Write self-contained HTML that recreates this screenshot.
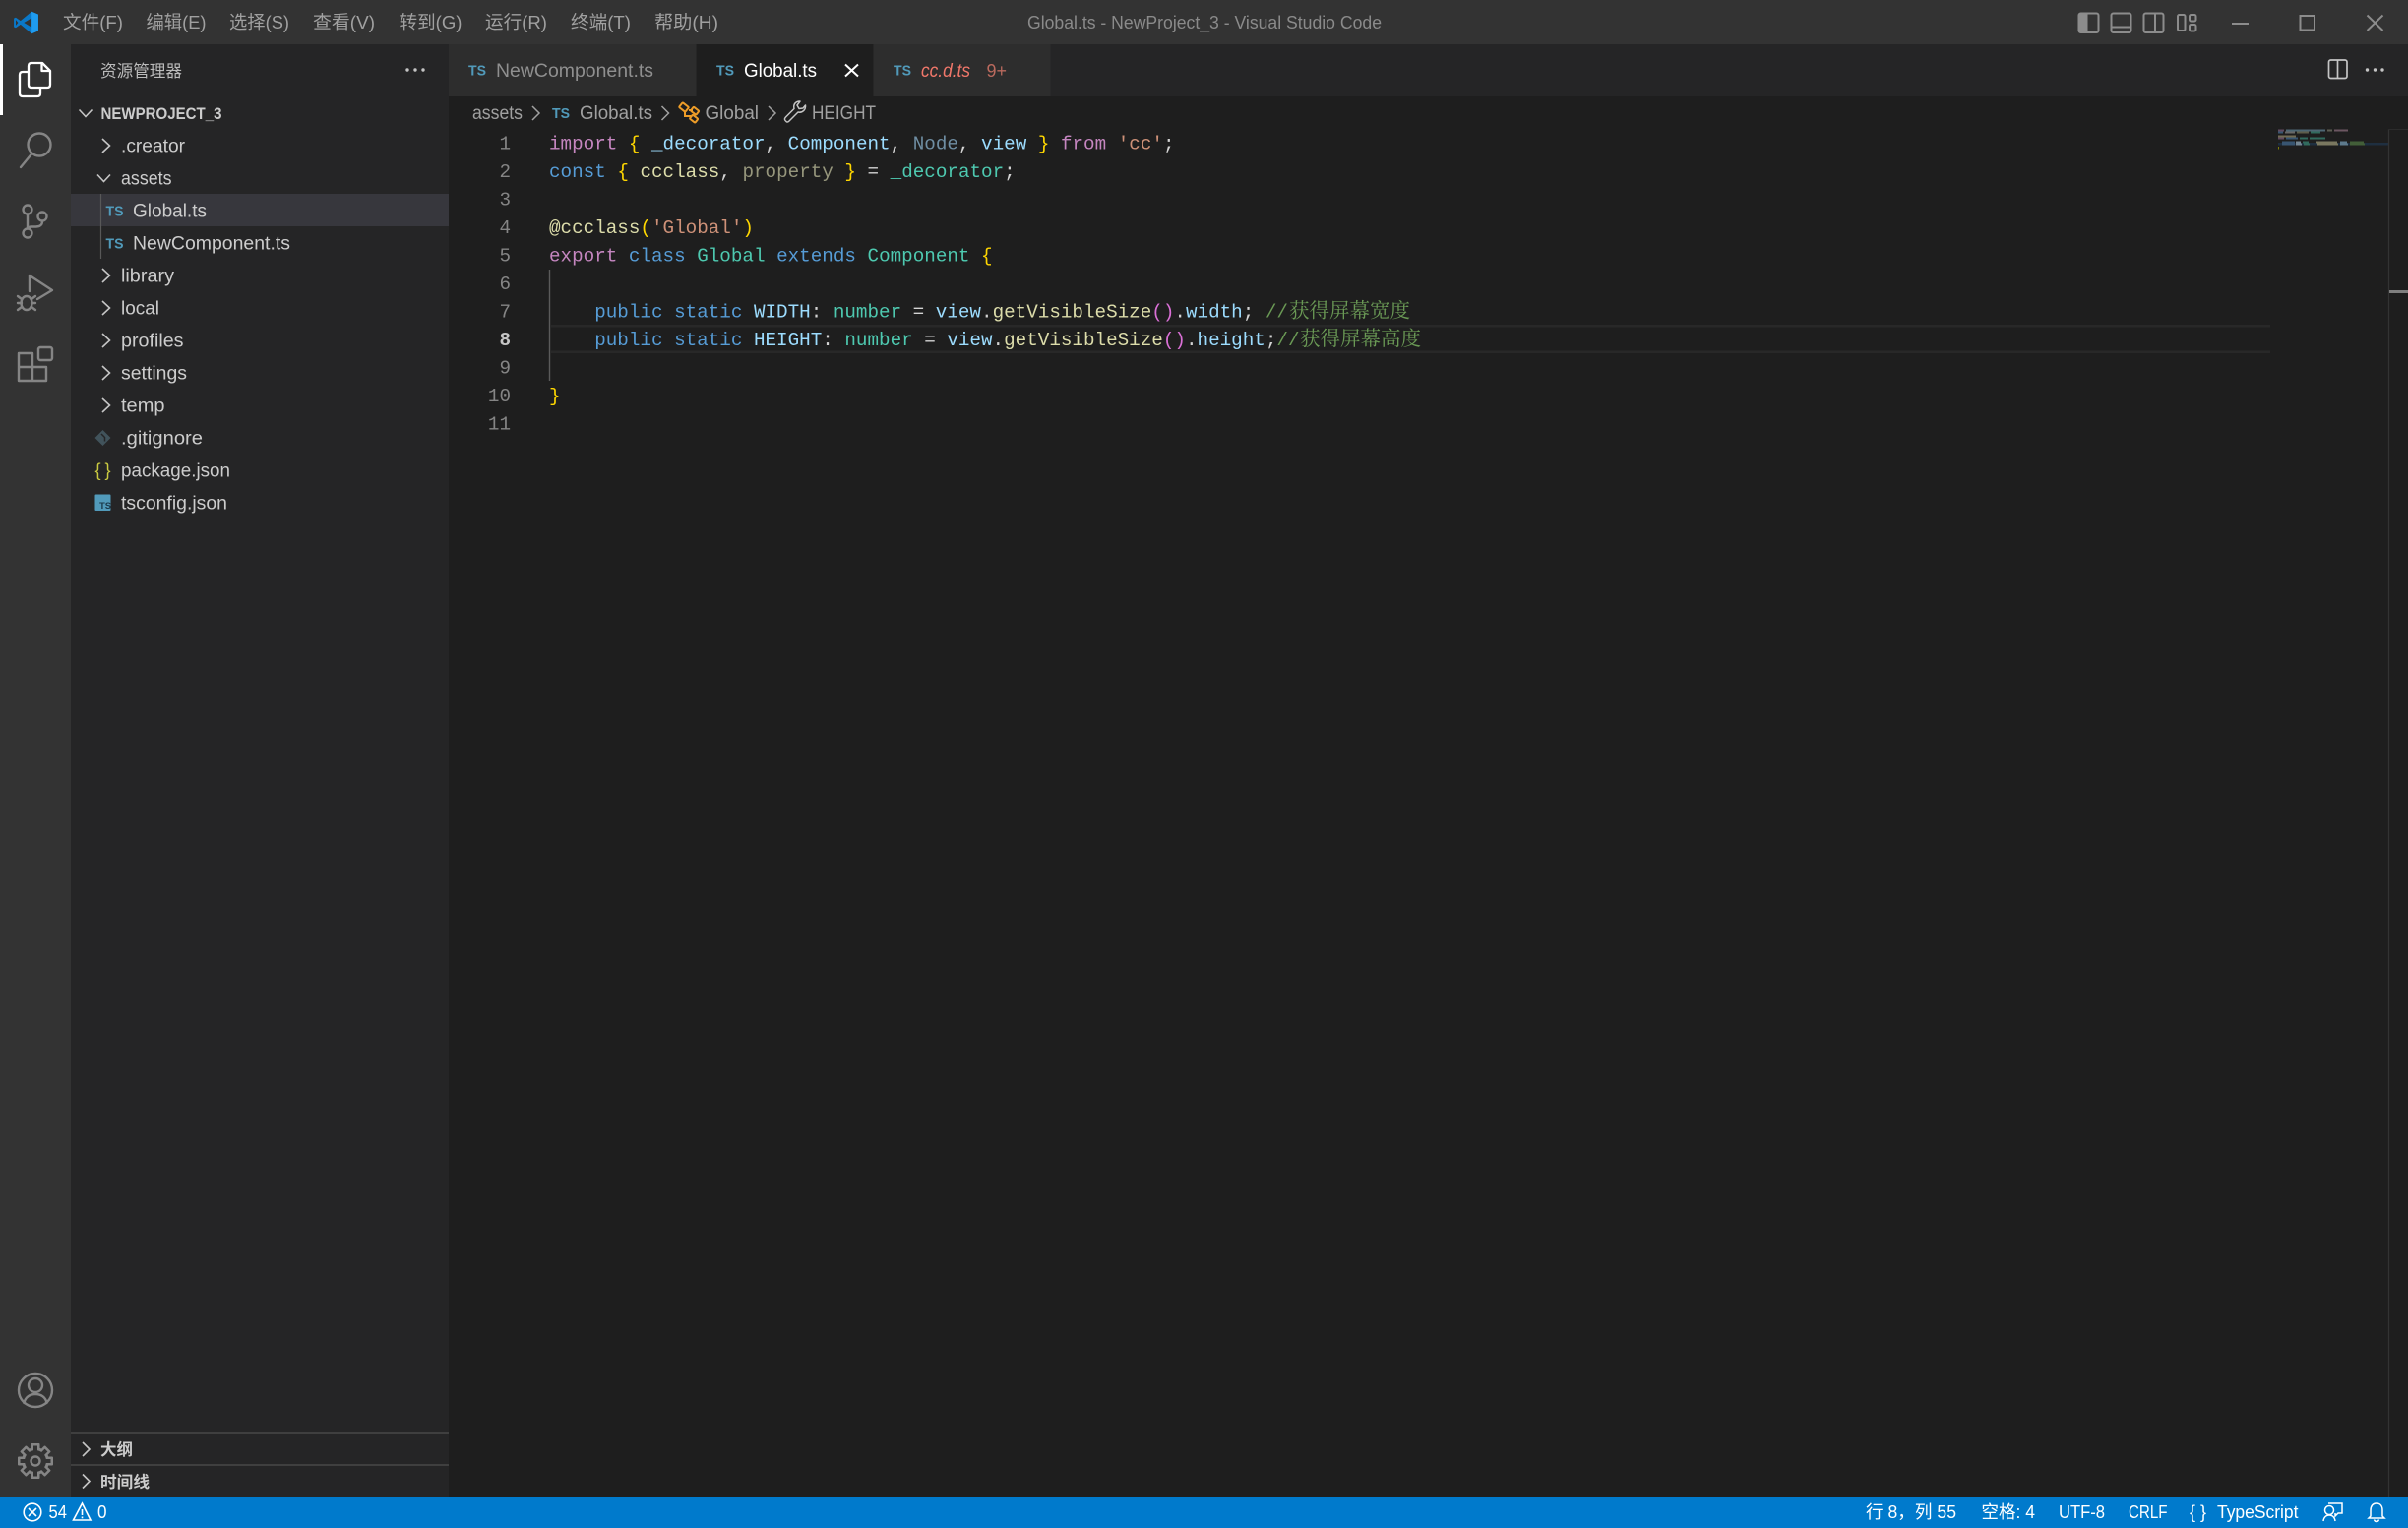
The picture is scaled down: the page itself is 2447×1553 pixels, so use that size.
<!DOCTYPE html>
<html lang="zh"><head><meta charset="utf-8"><title>Global.ts - NewProject_3 - Visual Studio Code</title>
<style>
html,body{margin:0;padding:0;background:#1e1e1e;width:2447px;height:1553px;overflow:hidden}
svg{display:block;position:absolute;left:0;top:0}
text{font-family:"Liberation Sans","Noto Sans CJK SC",sans-serif;white-space:pre}
.m{font-size:18.5px;fill:#a0a0a0}
.s{font-size:19px;fill:#cccccc}
.b{font-size:19px;fill:#a0a0a0}
.st{font-size:18px;fill:#ffffff}
.ts{font-size:15px;font-weight:bold;fill:#519aba}
.c{font-family:"Liberation Mono",monospace;font-size:19.25px;fill:#d4d4d4}
.n{font-family:"Liberation Mono",monospace;font-size:19.25px;fill:#858585;text-anchor:end}
.zh{font-family:"Noto Serif CJK SC",serif;font-size:20.5px;fill:#6a9955}
.ch{fill:none;stroke:#c5c5c5;stroke-width:1.6}
.ai{fill:none;stroke:#858585;stroke-width:2.4;stroke-linecap:round;stroke-linejoin:round}
.wi{fill:none;stroke:#8c8c8c;stroke-width:2}
.k{fill:#c586c0}.d{fill:#569cd6}.g{fill:#ffd700}.v{fill:#9cdcfe}.t{fill:#4ec9b0}.f{fill:#dcdcaa}.r{fill:#ce9178}.o{fill:#da70d6}.u{fill:#4fc1ff}
</style></head><body>
<svg width="2447" height="1553" viewBox="0 0 2447 1553" xmlns="http://www.w3.org/2000/svg">
<!-- backgrounds -->
<rect width="2447" height="1553" fill="#1e1e1e"/>
<rect width="2447" height="45" fill="#333333"/>
<rect y="45" width="72" height="1476" fill="#333333"/>
<rect x="72" y="45" width="384" height="1476" fill="#252526"/>
<rect x="456" y="45" width="1991" height="53" fill="#252526"/>
<rect x="456" y="45" width="251.500" height="53" fill="#2d2d2d"/>
<rect x="707.500" y="45" width="180" height="53" fill="#1e1e1e"/>
<rect x="887.500" y="45" width="180" height="53" fill="#2d2d2d"/>
<rect y="1521" width="2447" height="32" fill="#007acc"/>

<!-- title bar -->
<g transform="translate(13,11) scale(.27,.24)">
<polygon points="96,15 71,3 29,42 11,28 4,32 4,68 11,72 29,58 71,97 96,85" fill="#0a78c8"/>
<polygon points="71,30 42,50 71,70" fill="#333333"/>
<polygon points="11,38 20,50 11,62" fill="#333333"/>
<polygon points="71,3 96,15 96,85 71,97 71,70 71,30" fill="#1f9cf0"/>
</g>
<text class="m" x="64" y="29" textLength="61" lengthAdjust="spacingAndGlyphs">文件(F)</text>
<text class="m" x="148.500" y="29" textLength="61" lengthAdjust="spacingAndGlyphs">编辑(E)</text>
<text class="m" x="233" y="29" textLength="61" lengthAdjust="spacingAndGlyphs">选择(S)</text>
<text class="m" x="318" y="29" textLength="63" lengthAdjust="spacingAndGlyphs">查看(V)</text>
<text class="m" x="405.500" y="29" textLength="64" lengthAdjust="spacingAndGlyphs">转到(G)</text>
<text class="m" x="493" y="29" textLength="63" lengthAdjust="spacingAndGlyphs">运行(R)</text>
<text class="m" x="580" y="29" textLength="61" lengthAdjust="spacingAndGlyphs">终端(T)</text>
<text class="m" x="665" y="29" textLength="65" lengthAdjust="spacingAndGlyphs">帮助(H)</text>
<text x="1044" y="29" font-size="18" fill="#8a8a8a" textLength="360" lengthAdjust="spacingAndGlyphs">Global.ts - NewProject_3 - Visual Studio Code</text>

<rect class="wi" x="2112.500" y="13.500" width="20" height="19.500" rx="2"/>
<rect x="2112.500" y="13.500" width="9" height="19.500" fill="#8c8c8c"/>
<rect class="wi" x="2145.500" y="13.500" width="20" height="19.500" rx="2"/><path class="wi" d="M2145.500 27.500h20"/>
<rect class="wi" x="2178.500" y="13.500" width="20" height="19.500" rx="2"/><path class="wi" d="M2190 13.500v19.500"/>
<rect class="wi" x="2213" y="15" width="7.500" height="16" rx="1.500"/>
<rect class="wi" x="2225" y="15" width="6.500" height="6.500" rx="1.500"/>
<rect class="wi" x="2225" y="25" width="6.500" height="6.500" rx="1.500"/>
<path class="wi" d="M2268 24h17"/>
<rect class="wi" x="2337.500" y="16" width="14.500" height="14.500"/>
<path class="wi" d="M2405.500 15.500l16 15.500M2421.500 15.500l-16 15.500"/>

<!-- activity bar -->
<rect x="0" y="45" width="3" height="72" fill="#ffffff"/>
<g fill="none" stroke="#ffffff" stroke-width="2.300" stroke-linejoin="round">
<path d="M29 73h-6q-3 0 -3 3v19q0 3 3 3h15q3 0 3 -3v-6"/>
<path d="M32 64h11l8 8v14q0 3 -3 3h-16q-3 0 -3 -3v-19q0 -3 3 -3z"/>
<path d="M42.500 64v8h8"/>
</g>
<circle class="ai" cx="40" cy="147" r="11.500"/><path class="ai" d="M32.500 156L21 170"/>
<circle class="ai" cx="28" cy="213" r="4.500"/><circle class="ai" cx="28" cy="237" r="4.500"/><circle class="ai" cx="43" cy="220" r="4.500"/>
<path class="ai" d="M28 218v14M43 225c0 5 -4 5.500 -8 5.500h-3q-2.500 0 -4 1.500"/>
<path class="ai" d="M30 296v-16l23 15l-15 9"/>
<ellipse class="ai" cx="27" cy="308" rx="5.500" ry="7"/>
<path class="ai" d="M18 301l4 3M36 301l-4 3M18 308h4M36 308h-4M18 315l4 -3M36 315l-4 -3"/>
<path class="ai" d="M19 359h14v14h14v14h-28zM19 373h14v14"/>
<rect class="ai" x="39" y="353" width="14" height="13" rx="2"/>
<circle class="ai" cx="36" cy="1413" r="17"/>
<circle class="ai" cx="36" cy="1408" r="7"/>
<path class="ai" d="M24.500 1426c1 -6 6 -9 11.500 -9s10.500 3 11.500 9"/>
<g transform="translate(36,1485)">
<g fill="#858585"><circle r="14"/><rect x="-4.500" y="-18" width="9" height="36" rx="1"/><rect x="-4.500" y="-18" width="9" height="36" rx="1" transform="rotate(45)"/><rect x="-4.500" y="-18" width="9" height="36" rx="1" transform="rotate(90)"/><rect x="-4.500" y="-18" width="9" height="36" rx="1" transform="rotate(135)"/></g>
<g fill="#333333"><circle r="11"/><rect x="-2" y="-15.500" width="4" height="31"/><rect x="-2" y="-15.500" width="4" height="31" transform="rotate(45)"/><rect x="-2" y="-15.500" width="4" height="31" transform="rotate(90)"/><rect x="-2" y="-15.500" width="4" height="31" transform="rotate(135)"/></g>
<circle r="4.500" fill="none" stroke="#858585" stroke-width="2.400"/>
</g>

<!-- sidebar -->
<text x="102" y="78" font-size="17" fill="#bbbbbb" textLength="83" lengthAdjust="spacingAndGlyphs">资源管理器</text>
<g fill="#c5c5c5"><circle cx="414" cy="71" r="1.700"/><circle cx="422" cy="71" r="1.700"/><circle cx="430" cy="71" r="1.700"/></g>
<rect x="72" y="197" width="384" height="33" fill="#37373d"/>
<path d="M102.500 197v66" stroke="#585858" stroke-width="1.200"/>

<path class="ch" d="M80.500 111.500l6.500 7l6.500 -7"/>
<text x="102.500" y="121" font-size="16.500" font-weight="bold" fill="#cccccc" textLength="123" lengthAdjust="spacingAndGlyphs">NEWPROJECT_3</text>
<path class="ch" d="M104 141l7.500 7l-7.500 7"/><text class="s" x="123" y="154.500" textLength="65" lengthAdjust="spacingAndGlyphs">.creator</text>
<path class="ch" d="M99 177.500l6.500 7l6.500 -7"/><text class="s" x="123" y="187.500" textLength="51.500" lengthAdjust="spacingAndGlyphs">assets</text>
<text class="ts" x="107.500" y="219.500" textLength="18" lengthAdjust="spacingAndGlyphs">TS</text><text class="s" x="135" y="220.500" textLength="75" lengthAdjust="spacingAndGlyphs">Global.ts</text>
<text class="ts" x="107.500" y="252.500" textLength="18" lengthAdjust="spacingAndGlyphs">TS</text><text class="s" x="135" y="253.500" textLength="160" lengthAdjust="spacingAndGlyphs">NewComponent.ts</text>
<path class="ch" d="M104 273l7.500 7l-7.500 7"/><text class="s" x="123" y="286.500" textLength="54" lengthAdjust="spacingAndGlyphs">library</text>
<path class="ch" d="M104 306l7.500 7l-7.500 7"/><text class="s" x="123" y="319.500" textLength="39" lengthAdjust="spacingAndGlyphs">local</text>
<path class="ch" d="M104 339l7.500 7l-7.500 7"/><text class="s" x="123" y="352.500" textLength="63.500" lengthAdjust="spacingAndGlyphs">profiles</text>
<path class="ch" d="M104 372l7.500 7l-7.500 7"/><text class="s" x="123" y="385.500" textLength="67" lengthAdjust="spacingAndGlyphs">settings</text>
<path class="ch" d="M104 405l7.500 7l-7.500 7"/><text class="s" x="123" y="418.500" textLength="44.500" lengthAdjust="spacingAndGlyphs">temp</text>
<polygon points="104.500,437 112.500,445 104.500,453 96.500,445" fill="#41535b"/>
<path d="M103 441l3.500 3.500v4" stroke="#252526" stroke-width="1.500" fill="none"/>
<text class="s" x="123" y="451.500" textLength="83" lengthAdjust="spacingAndGlyphs">.gitignore</text>
<text x="96.500 106.500" y="484" font-size="18" fill="#cbcb41">{}</text>
<text class="s" x="123" y="484.500" textLength="111" lengthAdjust="spacingAndGlyphs">package.json</text>
<rect x="96.500" y="502.500" width="16" height="16.500" rx="1" fill="#519aba"/>
<text x="101" y="517" font-size="9.500" font-weight="bold" fill="#1b3a4b">TS</text>
<text class="s" x="123" y="517.500" textLength="108" lengthAdjust="spacingAndGlyphs">tsconfig.json</text>

<rect x="72" y="1455" width="384" height="2" fill="#3f3f3f"/>
<rect x="72" y="1488" width="384" height="2" fill="#3f3f3f"/>
<path class="ch" d="M84 1466l7 7l-7 7"/>
<text x="102" y="1479" font-size="16.500" font-weight="bold" fill="#cccccc" textLength="33" lengthAdjust="spacingAndGlyphs">大纲</text>
<path class="ch" d="M84 1498.500l7 7l-7 7"/>
<text x="102" y="1512" font-size="16.500" font-weight="bold" fill="#cccccc" textLength="50" lengthAdjust="spacingAndGlyphs">时间线</text>

<!-- tabs -->
<text class="ts" x="476" y="76.500" textLength="18" lengthAdjust="spacingAndGlyphs">TS</text>
<text x="504" y="78" font-size="19" fill="#8f8f8f" textLength="160" lengthAdjust="spacingAndGlyphs">NewComponent.ts</text>
<text class="ts" x="728" y="76.500" textLength="18" lengthAdjust="spacingAndGlyphs">TS</text>
<text x="756" y="78" font-size="19" fill="#ffffff" textLength="74" lengthAdjust="spacingAndGlyphs">Global.ts</text>
<path d="M859 65.500l13 12M872 65.500l-13 12" stroke="#ffffff" stroke-width="2" fill="none"/>
<text class="ts" x="908" y="76.500" textLength="18" lengthAdjust="spacingAndGlyphs">TS</text>
<text x="936" y="78" font-size="19" font-style="italic" fill="#f0776a" textLength="50" lengthAdjust="spacingAndGlyphs">cc.d.ts</text>
<text x="1002.500" y="78" font-size="18" fill="#bb6a5e" textLength="20.500" lengthAdjust="spacingAndGlyphs">9+</text>
<rect x="2366.500" y="61" width="18.500" height="18.500" rx="2" fill="none" stroke="#c5c5c5" stroke-width="1.700"/><path d="M2375.500 61v18.500" stroke="#c5c5c5" stroke-width="1.700"/>
<g fill="#c5c5c5"><circle cx="2405.500" cy="71" r="1.700"/><circle cx="2413.500" cy="71" r="1.700"/><circle cx="2421" cy="71" r="1.700"/></g>

<!-- breadcrumbs -->
<text class="b" x="480" y="121" textLength="51" lengthAdjust="spacingAndGlyphs">assets</text>
<path d="M541 108l7 7l-7 7" fill="none" stroke="#a0a0a0" stroke-width="1.500"/>
<text class="ts" x="561" y="120" textLength="18" lengthAdjust="spacingAndGlyphs">TS</text>
<text class="b" x="589" y="121" textLength="74" lengthAdjust="spacingAndGlyphs">Global.ts</text>
<path d="M672.500 108l7 7l-7 7" fill="none" stroke="#a0a0a0" stroke-width="1.500"/>
<g fill="none" stroke="#ee9d28" stroke-width="2">
<rect x="691" y="106" width="8" height="6" rx="1" transform="rotate(38 695 109)"/>
<rect x="703" y="110" width="7" height="5" rx="1" transform="rotate(38 706 112)"/>
<rect x="702" y="118" width="7" height="5" rx="1" transform="rotate(38 705 120)"/>
<path d="M696 113v5h6M700 112h4"/>
</g>
<text class="b" x="716.500" y="121" textLength="54.500" lengthAdjust="spacingAndGlyphs">Global</text>
<path d="M781 108l7 7l-7 7" fill="none" stroke="#a0a0a0" stroke-width="1.500"/>
<path d="M799 123.500c-2 -1.500 -2 -3 -.5 -4.500l8.500 -8.500c-1 -4 1 -7.500 6 -7.500l-3 4l2 3.500l4 -.5l2.500 -3c.5 4.500 -3 8 -7.500 7l-9 9c-1 1 -2 1.500 -3 .5z" fill="none" stroke="#c5c5c5" stroke-width="1.500" stroke-linejoin="round"/>
<text class="b" x="825" y="121" textLength="65" lengthAdjust="spacingAndGlyphs">HEIGHT</text>

<!-- editor -->
<rect x="560" y="330" width="1747" height="2.500" fill="#282828"/>
<rect x="560" y="356.500" width="1747" height="2.500" fill="#282828"/>
<path d="M558.500 274v113" stroke="#5a5a5a" stroke-width="1.400"/>

<g transform="translate(0,-0.7)">
<text class="n" x="519" y="152">1</text>
<text class="n" x="519" y="180.500">2</text>
<text class="n" x="519" y="209">3</text>
<text class="n" x="519" y="237.500">4</text>
<text class="n" x="519" y="266">5</text>
<text class="n" x="519" y="294.500">6</text>
<text class="n" x="519" y="323">7</text>
<text class="n" x="519" y="351.500" style="fill:#c6c6c6;font-weight:bold">8</text>
<text class="n" x="519" y="380">9</text>
<text class="n" x="519" y="408.500">10</text>
<text class="n" x="519" y="437">11</text>

<text class="c" x="558" y="152"><tspan class="k">import</tspan> <tspan class="g">{</tspan> <tspan class="v">_decorator</tspan>, <tspan class="v">Component</tspan>, <tspan style="fill:#6f8ea3">Node</tspan>, <tspan class="v">view</tspan> <tspan class="g">}</tspan> <tspan class="k">from</tspan> <tspan class="r">'cc'</tspan>;</text>
<text class="c" x="558" y="180.500"><tspan class="d">const</tspan> <tspan class="g">{</tspan> <tspan class="f">ccclass</tspan>, <tspan style="fill:#96967c">property</tspan> <tspan class="g">}</tspan> = <tspan class="t">_decorator</tspan>;</text>
<text class="c" x="558" y="237.500"><tspan class="f">@ccclass</tspan><tspan class="g">(</tspan><tspan class="r">'Global'</tspan><tspan class="g">)</tspan></text>
<text class="c" x="558" y="266"><tspan class="k">export</tspan> <tspan class="d">class</tspan> <tspan class="t">Global</tspan> <tspan class="d">extends</tspan> <tspan class="t">Component</tspan> <tspan class="g">{</tspan></text>
<text class="c" x="604.200" y="323"><tspan class="d">public</tspan> <tspan class="d">static</tspan> <tspan class="v">WIDTH</tspan>: <tspan class="t">number</tspan> = <tspan class="v">view</tspan>.<tspan class="f">getVisibleSize</tspan><tspan class="o">()</tspan>.<tspan class="v">width</tspan>; <tspan style="fill:#6a9955">//</tspan></text>
<text class="zh" x="1310" y="323" textLength="123" lengthAdjust="spacingAndGlyphs">获得屏幕宽度</text>
<text class="c" x="604.200" y="351.500"><tspan class="d">public</tspan> <tspan class="d">static</tspan> <tspan class="v">HEIGHT</tspan>: <tspan class="t">number</tspan> = <tspan class="v">view</tspan>.<tspan class="f">getVisibleSize</tspan><tspan class="o">()</tspan>.<tspan class="v">height</tspan>;<tspan style="fill:#6a9955">//</tspan></text>
<text class="zh" x="1321" y="351.500" textLength="123" lengthAdjust="spacingAndGlyphs">获得屏幕高度</text>
<text class="c" x="558" y="408.500"><tspan class="g">}</tspan></text>
</g>

<!-- minimap -->
<g opacity=".6">
<rect x="2315" y="145" width="112" height="2.500" fill="#1f3b57"/>
<rect x="2315" y="131.500" width="6" height="2" fill="#8f6a8c"/><rect x="2323" y="131.500" width="40" height="2" fill="#6f98ae"/><rect x="2365" y="131.500" width="5" height="2" fill="#888877"/><rect x="2372" y="131.500" width="14" height="2" fill="#a07c8f"/>
<rect x="2315" y="133.500" width="5" height="2" fill="#4a7ba8"/><rect x="2322" y="133.500" width="10" height="2" fill="#999999"/><rect x="2334" y="133.500" width="12" height="2" fill="#888868"/><rect x="2348" y="133.500" width="10" height="2" fill="#3f9d88"/>
<rect x="2315" y="137.500" width="18" height="2" fill="#a89f78"/>
<rect x="2315" y="139.500" width="6" height="2" fill="#8f6a8c"/><rect x="2323" y="139.500" width="12" height="2" fill="#4a7ba8"/><rect x="2337" y="139.500" width="8" height="2" fill="#3f9d88"/><rect x="2347" y="139.500" width="16" height="2" fill="#3f9d88"/>
<rect x="2319" y="143.500" width="13" height="2" fill="#4a7ba8"/><rect x="2333" y="143.500" width="5" height="2" fill="#aecbe0"/><rect x="2340" y="143.500" width="6" height="2" fill="#3f9d88"/><rect x="2354" y="143.500" width="21" height="2" fill="#b8b48c"/><rect x="2378" y="143.500" width="7" height="2" fill="#88b8d8"/><rect x="2388" y="143.500" width="14" height="2" fill="#5a8a4a"/>
<rect x="2319" y="145.500" width="13" height="2" fill="#4a7ba8"/><rect x="2333" y="145.500" width="6" height="2" fill="#aecbe0"/><rect x="2341" y="145.500" width="6" height="2" fill="#3f9d88"/><rect x="2355" y="145.500" width="21" height="2" fill="#b8b48c"/><rect x="2378" y="145.500" width="8" height="2" fill="#88b8d8"/><rect x="2388" y="145.500" width="15" height="2" fill="#5a8a4a"/>
<rect x="2315" y="149" width="1" height="2.500" fill="#bbbb00"/>
</g>
<path d="M2427.500 131V1521" stroke="#333333" stroke-width="1.200"/>
<path d="M2427 131.500h20" stroke="#2c2c2c" stroke-width="1"/>
<rect x="2428" y="295" width="19" height="3" fill="#7f7f7f"/>

<!-- status bar -->
<circle cx="33" cy="1537" r="8.800" fill="none" stroke="#fff" stroke-width="1.600"/>
<path d="M29 1533l8 8M37 1533l-8 8" stroke="#fff" stroke-width="1.600"/>
<text class="st" x="49.500" y="1543" textLength="18.500" lengthAdjust="spacingAndGlyphs">54</text>
<path d="M83.500 1528l8.500 17h-17.500zM83.500 1534v6M83.500 1541.500v1.800" fill="none" stroke="#fff" stroke-width="1.600"/>
<text class="st" x="99" y="1543" textLength="9.500" lengthAdjust="spacingAndGlyphs">0</text>

<text class="st" x="1896" y="1543" textLength="92" lengthAdjust="spacingAndGlyphs">行 8，列 55</text>
<text class="st" x="2013.500" y="1543" textLength="54.500" lengthAdjust="spacingAndGlyphs">空格: 4</text>
<text class="st" x="2092" y="1543" textLength="47" lengthAdjust="spacingAndGlyphs">UTF-8</text>
<text class="st" x="2163" y="1543" textLength="39.500" lengthAdjust="spacingAndGlyphs">CRLF</text>
<text class="st" x="2225 2236" y="1543">{}</text>
<text class="st" x="2253" y="1543" textLength="82.500" lengthAdjust="spacingAndGlyphs">TypeScript</text>
<g fill="none" stroke="#fff" stroke-width="1.500">
<circle cx="2367" cy="1535" r="4.500"/>
<path d="M2361 1546c.5 -4 3 -6 6 -6s5.500 2 6 6"/>
<path d="M2366 1528h14v10h-4l-3 3v-3"/>
<path d="M2409 1541v-6c0 -4 2 -7 6 -7s6 3 6 7v6l2 2h-16zM2412.500 1544.500c.5 1.500 1.500 2 2.500 2s2 -.5 2.500 -2"/>
</g>
</svg>
</body></html>
